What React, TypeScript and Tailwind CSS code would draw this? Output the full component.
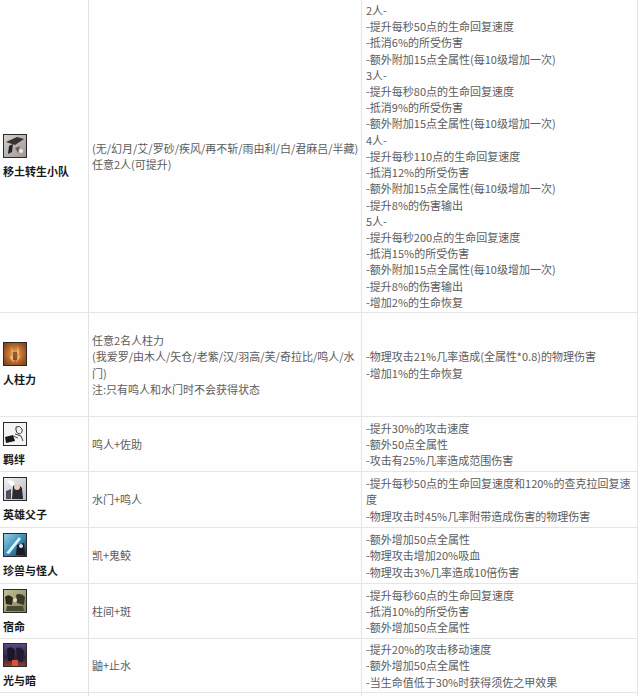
import React from "react";

type Row = {
  name: string;
  icon: number;
  h: string;
  c2: string[];
  c3: string[];
};

const rows: Row[] = [
  {
    name: "移土转生小队",
    icon: 1,
    h: "h-[313px]",
    c2: ["(无/幻月/艾/罗砂/疾风/再不斩/雨由利/白/君麻吕/半藏)", "任意2人(可提升)"],
    c3: [
      "2人-",
      "-提升每秒50点的生命回复速度",
      "-抵消6%的所受伤害",
      "-额外附加15点全属性(每10级增加一次)",
      "3人-",
      "-提升每秒80点的生命回复速度",
      "-抵消9%的所受伤害",
      "-额外附加15点全属性(每10级增加一次)",
      "4人-",
      "-提升每秒110点的生命回复速度",
      "-抵消12%的所受伤害",
      "-额外附加15点全属性(每10级增加一次)",
      "-提升8%的伤害输出",
      "5人-",
      "-提升每秒200点的生命回复速度",
      "-抵消15%的所受伤害",
      "-额外附加15点全属性(每10级增加一次)",
      "-提升8%的伤害输出",
      "-增加2%的生命恢复",
    ],
  },
  {
    name: "人柱力",
    icon: 2,
    h: "h-[104px]",
    c2: [
      "任意2名人柱力",
      "(我爱罗/由木人/矢仓/老紫/汉/羽高/芙/奇拉比/鸣人/水",
      "门)",
      "注:只有鸣人和水门时不会获得状态",
    ],
    c3: ["-物理攻击21%几率造成(全属性*0.8)的物理伤害", "-增加1%的生命恢复"],
  },
  {
    name: "羁绊",
    icon: 3,
    h: "h-[55px]",
    c2: ["鸣人+佐助"],
    c3: ["-提升30%的攻击速度", "-额外50点全属性", "-攻击有25%几率造成范围伤害"],
  },
  {
    name: "英雄父子",
    icon: 4,
    h: "h-[56px]",
    c2: ["水门+鸣人"],
    c3: [
      "-提升每秒50点的生命回复速度和120%的查克拉回复速",
      "度",
      "-物理攻击时45%几率附带造成伤害的物理伤害",
    ],
  },
  {
    name: "珍兽与怪人",
    icon: 5,
    h: "h-[56px]",
    c2: ["凯+鬼鲛"],
    c3: ["-额外增加50点全属性", "-物理攻击增加20%吸血", "-物理攻击3%几率造成10倍伤害"],
  },
  {
    name: "宿命",
    icon: 6,
    h: "h-[55px]",
    c2: ["柱间+斑"],
    c3: ["-提升每秒60点的生命回复速度", "-抵消10%的所受伤害", "-额外增加50点全属性"],
  },
  {
    name: "光与暗",
    icon: 7,
    h: "h-[54px]",
    c2: ["鼬+止水"],
    c3: ["-提升20%的攻击移动速度", "-额外增加50点全属性", "-当生命值低于30%时获得须佐之甲效果"],
  },
];

function Icon({ n }: { n: number }) {
  const id = `g${n}`;
  return (
    <svg width="24" height="24" viewBox="0 0 24 24" className="block">
      <defs>
        {n === 1 && (
          <linearGradient id={id} x1="0" y1="0" x2="1" y2="1">
            <stop offset="0" stopColor="#d8d4d0" />
            <stop offset="1" stopColor="#9c9490" />
          </linearGradient>
        )}
        {n === 2 && (
          <radialGradient id={id} cx="0.5" cy="0.5" r="0.7">
            <stop offset="0" stopColor="#f0b060" />
            <stop offset="0.5" stopColor="#b8662a" />
            <stop offset="1" stopColor="#6a3418" />
          </radialGradient>
        )}
        {n === 4 && (
          <linearGradient id={id} x1="0" y1="0" x2="1" y2="1">
            <stop offset="0" stopColor="#f2f2f4" />
            <stop offset="1" stopColor="#b8b8c0" />
          </linearGradient>
        )}
        {n === 5 && (
          <linearGradient id={id} x1="0" y1="0" x2="1" y2="1">
            <stop offset="0" stopColor="#9fd6ec" />
            <stop offset="0.5" stopColor="#3d8fb8" />
            <stop offset="1" stopColor="#1c2a44" />
          </linearGradient>
        )}
        {n === 6 && (
          <linearGradient id={id} x1="0" y1="0" x2="1" y2="1">
            <stop offset="0" stopColor="#c8c49a" />
            <stop offset="1" stopColor="#7c7a56" />
          </linearGradient>
        )}
        {n === 7 && (
          <linearGradient id={id} x1="0" y1="0" x2="0" y2="1">
            <stop offset="0" stopColor="#5a4c8a" />
            <stop offset="0.6" stopColor="#2c2440" />
            <stop offset="1" stopColor="#a03a28" />
          </linearGradient>
        )}
      </defs>
      {n === 1 && (
        <g>
          <rect x="0" y="0" width="24" height="24" fill={`url(#${id})`} />
          <path d="M3 8 L14 3 L21 5 L12 11 Z" fill="#3a3230" />
          <path d="M6 12 L10 10 L9 18 L5 20 Z" fill="#2a2220" />
          <path d="M12 14 L17 12 L15 19 Z" fill="#6a5a58" />
          <circle cx="18" cy="17" r="2" fill="#ece8e4" />
        </g>
      )}
      {n === 2 && (
        <g>
          <rect x="0" y="0" width="24" height="24" fill={`url(#${id})`} />
          <path d="M8 4 L10 10 L7 16 L11 21 L9 12 Z" fill="#ffd890" opacity="0.7" />
          <path d="M15 3 L14 10 L17 15 L13 21 L16 11 Z" fill="#ffe0a0" opacity="0.6" />
          <rect x="10" y="10" width="4" height="8" fill="#5a2a10" opacity="0.6" />
        </g>
      )}
      {n === 3 && (
        <g>
          <rect x="0" y="0" width="24" height="24" fill="#f4f4f4" />
          <path d="M13 5 Q17 3 19 7 Q20 11 16 12 Q13 11 13 8 Z" fill="none" stroke="#333" strokeWidth="1" />
          <path d="M12 12 L18 14 L20 19" fill="none" stroke="#444" strokeWidth="1" />
          <path d="M2 15 L10 13 L12 19 L3 21 Z" fill="#1a1a1a" />
          <path d="M10 14 L15 16" stroke="#555" strokeWidth="1" />
        </g>
      )}
      {n === 4 && (
        <g>
          <rect x="0" y="0" width="24" height="24" fill={`url(#${id})`} />
          <path d="M4 4 Q9 2 12 6 L9 10 Z" fill="#ffffff" />
          <path d="M10 9 Q16 6 19 11 L20 22 L9 22 Z" fill="#2a2a34" />
          <circle cx="14" cy="10" r="3" fill="#e8d0c0" />
          <path d="M3 14 L8 12 L8 22 L3 22 Z" fill="#505060" />
        </g>
      )}
      {n === 5 && (
        <g>
          <rect x="0" y="0" width="24" height="24" fill={`url(#${id})`} />
          <path d="M3 20 L16 4 L18 6 L6 21 Z" fill="#d8f2ff" />
          <path d="M14 12 L21 10 L22 22 L13 22 Z" fill="#1a1c2a" />
          <circle cx="18" cy="13" r="2" fill="#e8e0e0" />
        </g>
      )}
      {n === 6 && (
        <g>
          <rect x="0" y="0" width="24" height="24" fill={`url(#${id})`} />
          <path d="M2 8 Q6 4 10 9 L9 16 L3 15 Z" fill="#2a2a1e" />
          <path d="M13 6 Q18 3 22 8 L21 16 L14 14 Z" fill="#3a3a28" />
          <path d="M4 17 L20 17 L21 22 L3 22 Z" fill="#4a4a34" />
          <circle cx="12" cy="11" r="2" fill="#e0dcc0" />
        </g>
      )}
      {n === 7 && (
        <g>
          <rect x="0" y="0" width="24" height="24" fill={`url(#${id})`} />
          <path d="M4 6 Q8 2 12 7 L11 18 L5 18 Z" fill="#1c1628" />
          <path d="M13 5 Q18 3 21 8 L20 19 L14 18 Z" fill="#221a30" />
          <rect x="9" y="17" width="6" height="6" fill="#e05030" />
        </g>
      )}
      <rect x="0.5" y="0.5" width="23" height="23" fill="none" stroke="#2a2a2a" strokeWidth="1" />
    </svg>
  );
}

export default function App() {
  return (
    <div
      className="w-[640px] h-[696px] overflow-hidden bg-[#fefefe] text-[11px] leading-[16.2px]"
      style={{ fontFamily: '"Noto Sans CJK SC", "Noto Sans", sans-serif' }}
    >
      <div className="w-[638px] border-r border-[#e4e4e4]">
        {rows.map((r, i) => (
          <div
            key={i}
            className={`grid grid-cols-[89px_273px_275px] border-b border-[#e6e6e6] ${r.h}`}
          >
            <div className="flex flex-col justify-center pl-[3px] border-r border-[#e2e2e2]">
              <Icon n={r.icon} />
              <div className="mt-[5px] leading-[16px] font-bold text-[#1a1a1a] whitespace-nowrap">
                {r.name}
              </div>
            </div>
            <div className="flex flex-col justify-center pl-[3px] border-r border-[#e6e6e6] text-[#5c5c5c]">
              {r.c2.map((t, j) => (
                <div key={j} className="whitespace-nowrap">
                  {t}
                </div>
              ))}
            </div>
            <div className="flex flex-col justify-center pl-[4px] text-[#5c5c5c]">
              {r.c3.map((t, j) => (
                <div key={j} className="whitespace-nowrap">
                  {t}
                </div>
              ))}
            </div>
          </div>
        ))}
        <div className="grid grid-cols-[89px_273px_275px] h-[20px]">
          <div className="border-r border-[#e2e2e2]" />
          <div className="border-r border-[#e6e6e6]" />
          <div />
        </div>
      </div>
    </div>
  );
}
